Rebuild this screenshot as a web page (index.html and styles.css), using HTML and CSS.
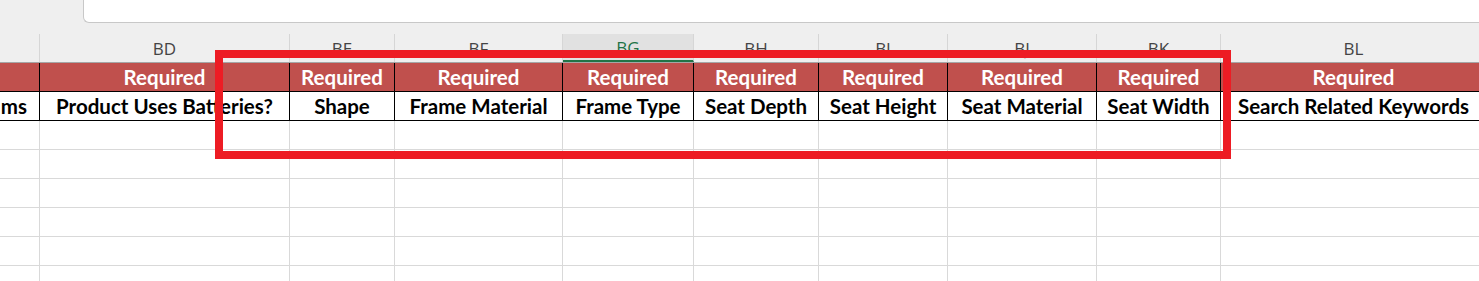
FILE: index.html
```html
<!DOCTYPE html>
<html lang="en">
<head>
    <meta charset="UTF-8">
    <meta name="viewport" content="width=device-width, initial-scale=1.0">
    <title>Sheet</title>
    <link rel="stylesheet" href="styles.css">
</head>
<body>

    <div class="topbar">
        <div class="formula-box"></div>
    </div>

    <div class="sheet">
        <div class="grid letters">
            <div class="col"></div>
            <div class="col">BD</div>
            <div class="col">BE</div>
            <div class="col">BF</div>
            <div class="col active">BG</div>
            <div class="col">BH</div>
            <div class="col">BI</div>
            <div class="col">BJ</div>
            <div class="col">BK</div>
            <div class="col">BL</div>
        </div>

        <div class="grid required">
            <div class="cell"></div>
            <div class="cell">Required</div>
            <div class="cell">Required</div>
            <div class="cell">Required</div>
            <div class="cell">Required</div>
            <div class="cell">Required</div>
            <div class="cell">Required</div>
            <div class="cell">Required</div>
            <div class="cell">Required</div>
            <div class="cell">Required</div>
        </div>

        <div class="grid fields">
            <div class="cell clip">ms</div>
            <div class="cell">Product Uses Batteries?</div>
            <div class="cell">Shape</div>
            <div class="cell">Frame Material</div>
            <div class="cell">Frame Type</div>
            <div class="cell">Seat Depth</div>
            <div class="cell">Seat Height</div>
            <div class="cell">Seat Material</div>
            <div class="cell">Seat Width</div>
            <div class="cell">Search Related Keywords</div>
        </div>

        <div class="grid empty" id="emptyRows"></div>

        <div class="highlight"></div>
    </div>

    <script>
        const emptyRows = document.getElementById('emptyRows');
        for (let i = 0; i < 60; i++) {
            const cell = document.createElement('div');
            cell.className = 'cell';
            emptyRows.appendChild(cell);
        }
    </script>

</body>
</html>
```

FILE: styles.css
```css
body, html {
    margin: 0;
    padding: 0;
    background-color: #ffffff;
    overflow: hidden;
}

.topbar {
    height: 34px;
    background-color: #efefef;
}

.formula-box {
    margin-left: 83px;
    height: 23px;
    background-color: #ffffff;
    border-left: 1px solid #c8c8c8;
    border-bottom: 1px solid #c8c8c8;
    border-bottom-left-radius: 6px;
    box-sizing: border-box;
}

.sheet {
    position: relative;
}

.grid {
    display: grid;
    grid-template-columns: 40px 250px 105px 168px 131px 125px 129px 149px 124px 266px;
}

.letters {
    height: 29px;
    background-color: #efefef;
    border-bottom: 1px solid #a6a6a6;
    box-sizing: border-box;
}

.col {
    display: flex;
    justify-content: center;
    align-items: center;
    border-right: 1px solid #d6d6d6;
    font-family: "Open Sans", sans-serif;
    font-size: 17px;
    color: #444444;
    box-sizing: border-box;
}

.col.active {
    background-color: #e1e1e1;
    color: #217346;
    border-bottom: 2px solid #217346;
}

.cell {
    height: 29px;
    display: flex;
    justify-content: center;
    align-items: center;
    border-right: 1px solid #000000;
    border-bottom: 1px solid #000000;
    box-sizing: border-box;
    font-family: Lato, sans-serif;
    font-weight: bold;
    font-size: 20.5px;
    white-space: nowrap;
    overflow: hidden;
}

.required .cell {
    background-color: #c0504d;
    color: #ffffff;
}

.fields .cell {
    background-color: #ffffff;
    color: #000000;
}

.fields .cell.clip {
    justify-content: flex-end;
    padding-right: 12px;
}

.empty .cell {
    border-right: 1px solid #d9d9d9;
    border-bottom: 1px solid #d9d9d9;
}

.highlight {
    position: absolute;
    left: 215px;
    top: 16px;
    width: 1016px;
    height: 109px;
    border: 8px solid #ed1c24;
    box-sizing: border-box;
}
```
